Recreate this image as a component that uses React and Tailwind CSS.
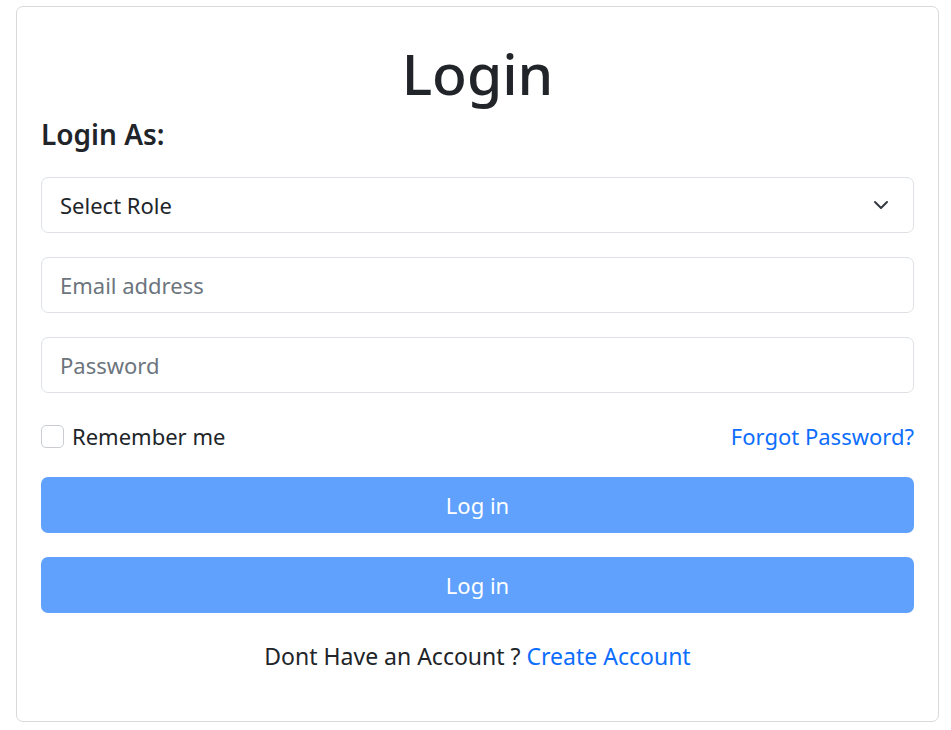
import { ChevronDown } from "lucide-react";

function Field({ placeholder, type = "text" }) {
  return (
    <input
      type={type}
      placeholder={placeholder}
      className="h-[56px] w-full rounded-[7px] border border-[#dee2e6] px-[18px] text-[22px] text-[#212529] outline-none placeholder:text-[#6c757d]"
    />
  );
}

function App() {
  return (
    <div className="min-h-screen bg-white pl-[16px] pt-[6px] font-['Noto_Sans',sans-serif] text-[#212529]">
      <div className="flex h-[716px] w-[923px] flex-col rounded-[7px] border border-[#d9d9d9] px-[24px]">
        <h1 className="mt-[30px] text-center text-[57px] font-medium leading-[72px]">Login</h1>
        <h4 className="mt-[9px] text-[28px] font-semibold leading-[32px]">Login As:</h4>

        <div className="mt-[27px] flex flex-col gap-[24px]">
          <div className="flex h-[56px] w-full items-center justify-between rounded-[7px] border border-[#dee2e6] pl-[18px] pr-[20px] text-[22px]">
            <span>Select Role</span>
            <ChevronDown className="h-[24px] w-[24px] text-[#343a40]" strokeWidth={2} />
          </div>
          <Field placeholder="Email address" type="email" />
          <Field placeholder="Password" type="password" />
        </div>

        <div className="mt-[19px] flex h-[48px] items-center justify-between text-[22px]">
          <label className="flex items-center gap-[8px]">
            <span className="block h-[23px] w-[23px] rounded-[5px] border border-[#c9cdd1] bg-white" />
            <span>Remember me</span>
          </label>
          <a className="text-[#0d6efd]">Forgot Password?</a>
        </div>

        <div className="mt-[17px] flex flex-col gap-[24px]">
          <button className="h-[56px] w-full rounded-[7px] bg-[#60a1fd] text-[22px] text-white">Log in</button>
          <button className="h-[56px] w-full rounded-[7px] bg-[#60a1fd] text-[22px] text-white">Log in</button>
        </div>

        <p className="mt-[25px] text-center text-[23px] leading-[36px]">
          Dont Have an Account ? <a className="text-[#0d6efd]">Create Account</a>
        </p>
      </div>
    </div>
  );
}

export default App;
